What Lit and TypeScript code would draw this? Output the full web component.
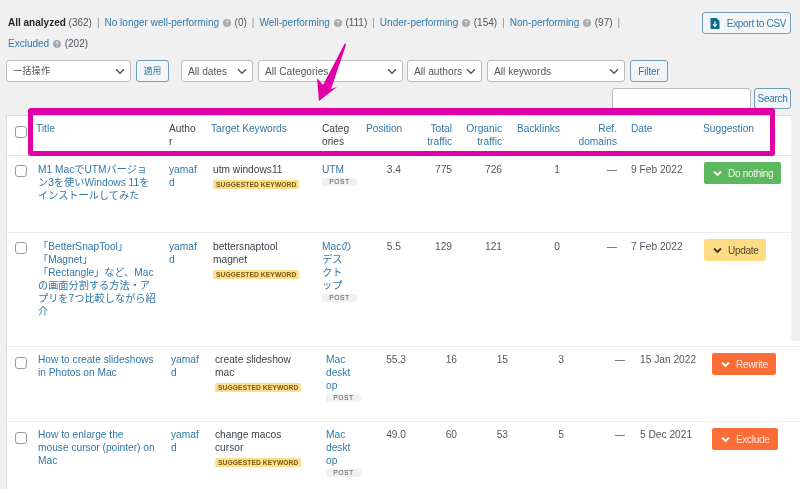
import { LitElement, html, css, svg } from "lit";
import { customElement } from "lit/decorators.js";

const chevron = html`<svg class="chev" width="10" height="7" viewBox="0 0 10 7"><path d="M1 1.2 5 5.2 9 1.2" fill="none" stroke="#50575e" stroke-width="1.4"/></svg>`;
const help = html`<svg class="help" width="8" height="8" viewBox="0 0 8 8"><circle cx="4" cy="4" r="4" fill="#a7aaad"/><path d="M2.9 3.1C3 2.4 3.4 2.1 4 2.1c.7 0 1.1.4 1.1.9 0 .8-1 .8-1 1.6" fill="none" stroke="#fff" stroke-width=".8"/><circle cx="4" cy="6" r=".5" fill="#fff"/></svg>`;
const btnChev = (c: string) => html`<svg class="bchev" width="9" height="7" viewBox="0 0 9 7"><path d="M1 1.5 4.5 5 8 1.5" fill="none" stroke=${c} stroke-width="1.8"/></svg>`;

interface Row {
  cls: string; title: string; kw: string; cat: string;
  pos: string; total: string; org: string; back: string; date: string;
  action: string; kind: string;
}

const rows1: Row[] = [
  { cls: "r1", title: "M1 MacでUTMバージョ\nン3を使いWindows 11を\nインストールしてみた", kw: "utm windows11", cat: "UTM", pos: "3.4", total: "775", org: "726", back: "1", date: "9 Feb 2022", action: "Do nothing", kind: "green" },
  { cls: "r2", title: "「BetterSnapTool」\n「Magnet」\n「Rectangle」など、Mac\nの画面分割する方法・ア\nプリを7つ比較しながら紹\n介", kw: "bettersnaptool\nmagnet", cat: "Macの\nデス\nクト\nップ", pos: "5.5", total: "129", org: "121", back: "0", date: "7 Feb 2022", action: "Update", kind: "yellow" },
];
const rows2: Row[] = [
  { cls: "r3", title: "How to create slideshows\nin Photos on Mac", kw: "create slideshow\nmac", cat: "Mac\ndeskt\nop", pos: "55.3", total: "16", org: "15", back: "3", date: "15 Jan 2022", action: "Rewrite", kind: "orange" },
  { cls: "r4", title: "How to enlarge the\nmouse cursor (pointer) on\nMac", kw: "change macos\ncursor", cat: "Mac\ndeskt\nop", pos: "49.0", total: "60", org: "53", back: "5", date: "5 Dec 2021", action: "Exclude", kind: "orange" },
];

@customElement("app-root")
export class AppRoot extends LitElement {
  static styles = css`
    :host { display: block; position: relative; width: 800px; height: 489px; overflow: hidden; background: #f0f0f1; font-family: "Liberation Sans", "Noto Sans CJK JP", sans-serif; font-size: 10.2px; line-height: 13px; color: #3c434a; filter: blur(0.4px); }
    a { color: #3178a8; text-decoration: none; }
    .top { display: flex; justify-content: space-between; align-items: flex-start; padding: 12px 9px 0 8px; height: 48px; box-sizing: border-box; }
    .tabs { width: 680px; line-height: 21px; font-size: 10px; color: #50575e; }
    .tabs b { color: #1d2327; }
    .sep { color: #8c8f94; margin: 0 5px; }
    .help { margin: 0 1px; vertical-align: -0.5px; }
    .btn { box-sizing: border-box; border: 1px solid #6d9cbc; border-radius: 3px; background: #f3f5f6; color: #3178a8; display: flex; align-items: center; justify-content: center; white-space: nowrap; }
    .export { width: 89px; height: 22px; gap: 7px; flex: none; font-size: 10px; letter-spacing: -.3px; padding-left: 3px; }
    .filters { display: flex; height: 22px; margin-top: 12px; padding-left: 6px; align-items: stretch; }
    .sel { box-sizing: border-box; background: #fff; border: 1px solid #b9bcbf; border-radius: 3px; display: flex; align-items: center; justify-content: space-between; padding: 0 5px 0 6px; color: #50575e; white-space: nowrap; }
    .cjk { font-size: 9.3px; }
    .s1 { width: 125px; } .s2 { width: 72px; margin-left: 12px; } .s3 { width: 145px; margin-left: 5px; }
    .s4 { width: 75px; margin-left: 4px; } .s5 { width: 138px; margin-left: 5px; }
    .apply { width: 33px; margin-left: 5px; font-size: 8.8px; } .filter { width: 38px; margin-left: 5px; font-size: 10px; letter-spacing: -.1px; }
    .search { display: flex; justify-content: flex-end; gap: 3px; padding: 6px 9px 0 0; height: 33px; box-sizing: border-box; }
    .input { width: 139px; height: 21px; box-sizing: border-box; background: #fff; border: 1px solid #b9bcbf; border-radius: 3px; }
    .sbtn { width: 37px; height: 21px; font-size: 10px; letter-spacing: -.3px; }
    .s-one { margin: 0 9px 0 6px; background: #fff; border-left: 1px solid #dcdcde; border-top: 1px solid #dcdcde; }
    .s-two { margin-left: 6px; background: #fff; border-left: 1px solid #dcdcde; }
    .spacer { height: 5px; border-bottom: 1px solid #ececec; }
    .grid { display: grid; margin-left: -1px; grid-template-columns: 26px 131px 44px 109px 44px 45px 51px 50px 58px 61px 74px 92px; }
    .s-two .grid { grid-template-columns: 26px 133px 44px 111px 45px 45px 51px 51px 56px 66px 73px 93px; }
    .head { height: 39px; border-bottom: 1px solid #e2e2e2; }
    .row { border-bottom: 1px solid #ececec; }
    .r1 { height: 76px; } .r2 { height: 108px; border-bottom: none; } .r3 { height: 74px; } .r4 { height: 70px; border-bottom: none; }
    .c { padding: 7px 4px 0 6px; white-space: pre; min-width: 0; }
    .head .c { padding-top: 6px; }
    .head .link { padding-left: 4px; }
    .n, .date { color: #50575e; }
    .n { text-align: right; }
    .ref { padding-right: 8px; }
    .s-two .ref { padding-right: 9px; }
    .cb { padding: 9px 0 0 9px; }
    .head .cb { padding-top: 10px; }
    .box { display: block; width: 12px; height: 12px; box-sizing: border-box; background: #fff; border: 1px solid #9a9da0; border-radius: 3px; }
    .s-two .c { padding-top: 6px; }
    .s-two .c.cb { padding: 10px 0 0 9px; }
    .tag { display: block; width: max-content; line-height: 9px; border-radius: 2px; margin-top: 4px; }
    .sug { background: #fbdf8e; color: #7a5a12; padding: 0 3px; font-size: 6.7px; font-weight: 700; letter-spacing: .1px; }
    .post { background: #f0f0f1; color: #50575e; width: 35px; text-align: center; margin-top: 2px; font-size: 6.8px; line-height: 8px; letter-spacing: .5px; }
    .c.act, .s-two .c.act { padding: 6px 0 0 5px; }
    .pill { display: inline-flex; box-sizing: border-box; align-items: center; height: 22px; padding: 0 0 0 9px; gap: 6px; border-radius: 2px; font-size: 10px; letter-spacing: -.3px; }
    .green { background: #5cb85c; color: #eef8ee; width: 77px; }
    .yellow { background: #fedc85; color: #50472a; width: 62px; }
    .orange { background: #fb6c36; color: #ffe9df; }
    .rw { width: 64px; } .ex { width: 66px; }
    .frame { position: absolute; left: 28px; top: 108px; width: 747px; height: 48px; box-sizing: border-box; border: solid #e100a5; border-width: 7px 5px 5px 5px; border-radius: 3px; }
    .arrow { position: absolute; left: 0; top: 0; pointer-events: none; }
  `;

  private renderRow(r: Row) {
    const cls = r.action === "Rewrite" ? "rw" : r.action === "Exclude" ? "ex" : "";
    return html`<div class="grid row ${r.cls}">
      <div class="c cb"><span class="box"></span></div>
      <div class="c"><a>${r.title}</a></div>
      <div class="c auth"><a>yamaf\nd</a></div>
      <div class="c kw">${r.kw}<span class="tag sug">SUGGESTED KEYWORD</span></div>
      <div class="c cat"><a>${r.cat}</a><span class="tag post">POST</span></div>
      <div class="c n">${r.pos}</div>
      <div class="c n">${r.total}</div>
      <div class="c n">${r.org}</div>
      <div class="c n">${r.back}</div>
      <div class="c n ref">—</div>
      <div class="c date">${r.date}</div>
      <div class="c act"><span class="pill ${r.kind} ${cls}">${btnChev(r.kind === "yellow" ? "#3c3520" : "#f4fff4")}${r.action}</span></div>
    </div>`;
  }

  render() {
    return html`
      <div class="top">
        <div class="tabs">
          <b>All analyzed</b> (362)<span class="sep">|</span><a>No longer well-performing</a> ${help} (0)<span class="sep">|</span><a>Well-performing</a> ${help} (111)<span class="sep">|</span><a>Under-performing</a> ${help} (154)<span class="sep">|</span><a>Non-performing</a> ${help} (97)<span class="sep">|</span><br />
          <a>Excluded</a> ${help} (202)
        </div>
        <div class="btn export">
          <svg width="10" height="11" viewBox="0 0 10 11"><path d="M0.5 0H6.5L9.5 3V11H0.5Z" fill="#0f6a8f"/><path d="M5 3.5V8M3 6.2 5 8.4 7 6.2" fill="none" stroke="#fff" stroke-width="1.2"/></svg>
          Export to CSV
        </div>
      </div>
      <div class="filters">
        <div class="sel s1"><span class="cjk">一括操作</span> ${chevron}</div>
        <div class="btn apply">適用</div>
        <div class="sel s2">All dates ${chevron}</div>
        <div class="sel s3">All Categories ${chevron}</div>
        <div class="sel s4">All authors ${chevron}</div>
        <div class="sel s5">All keywords ${chevron}</div>
        <div class="btn filter">Filter</div>
      </div>
      <div class="search"><div class="input"></div><div class="btn sbtn">Search</div></div>
      <div class="s-one">
        <div class="grid head">
          <div class="c cb"><span class="box"></span></div>
          <div class="c link"><a>Title</a></div>
          <div class="c">Autho\nr</div>
          <div class="c link"><a>Target Keywords</a></div>
          <div class="c">Categ\nories</div>
          <div class="c n"><a>Position</a></div>
          <div class="c n"><a>Total\ntraffic</a></div>
          <div class="c n"><a>Organic\ntraffic</a></div>
          <div class="c n"><a>Backlinks</a></div>
          <div class="c n ref"><a>Ref.\ndomains</a></div>
          <div class="c"><a>Date</a></div>
          <div class="c link"><a>Suggestion</a></div>
        </div>
        ${rows1.map((r) => this.renderRow(r))}
      </div>
      <div class="s-two">
        <div class="spacer"></div>
        ${rows2.map((r) => this.renderRow(r))}
      </div>
      <div class="frame"></div>
      <svg class="arrow" width="800" height="489" viewBox="0 0 800 489">${svg`<path d="M345 43 L346 45 L331 89 L337 87 L319 101 L317 78 L323 85 Z" fill="#e100a5"/>`}</svg>
    `;
  }
}
